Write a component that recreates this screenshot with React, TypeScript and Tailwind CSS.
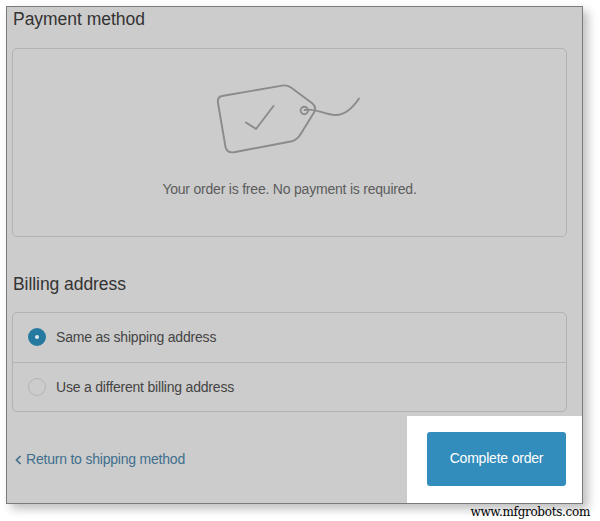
import { useState } from "react";

const options = ["Same as shipping address", "Use a different billing address"];

function PriceTag() {
  return (
    <svg
      width="180"
      height="100"
      viewBox="0 0 180 100"
      fill="none"
      stroke="#8b8b8b"
      strokeWidth="1.9"
      strokeLinecap="round"
      strokeLinejoin="round"
    >
      <path d="M22 26 L82 15.600 Q87 14.800 91 17.500 L112.500 33.500 Q117 37.500 114 42.500 L101 63.500 Q97.500 69.500 92 71.300 L34 82.200 Q27 83.300 25.500 77 L18 33 Q17 27 22 26 Z" />
      <path d="M46 52.500 L56 59 L73.500 36" />
      <circle cx="104.300" cy="40.500" r="3.700" />
      <path d="M104.500 40 C116 37.500 124 45 136 45 C147 45 154 36 159 28.500" />
    </svg>
  );
}

export default function App() {
  const [selected, setSelected] = useState(0);

  return (
    <div className="flex h-[521px] w-[600px] flex-col overflow-hidden bg-white font-['Liberation_Sans',Arial,sans-serif]">
      <main className="mt-1.5 ml-1.5 flex h-[498px] w-[577px] shrink-0 flex-col border border-[#7b7b7b] bg-[#cccccc] shadow-[5px_5px_9px_rgba(0,0,0,0.25)]">
        <section className="mx-[5px] w-[555px]">
          <h2 className="h-[41px] pl-px text-[17.5px] leading-6 tracking-[-0.03px] text-[#333333]">
            Payment method
          </h2>
          <div className="flex h-[189px] flex-col items-center rounded-[5px] border border-[#b3b3b3] pt-[21px]">
            <PriceTag />
            <p className="mt-[9px] text-[14px] leading-5 tracking-[-0.21px] text-[#5c5c5c]">
              Your order is free. No payment is required.
            </p>
          </div>
        </section>

        <section className="mx-[5px] w-[555px]">
          <h2 className="h-[75px] pl-px pt-[35px] text-[17.5px] leading-6 tracking-[-0.06px] text-[#333333]">
            Billing address
          </h2>
          <div className="h-[100px] rounded-[5px] border border-[#b3b3b3]">
            {options.map((label, i) => (
              <label
                key={label}
                className="flex h-[49px] items-center pl-[15px] text-[14px] tracking-[-0.2px] text-[#444444] first:h-[50px] first:border-b first:border-[#b3b3b3]"
              >
                <input
                  type="radio"
                  name="billing"
                  checked={selected === i}
                  onChange={() => setSelected(i)}
                  className="mr-2.5 mb-px size-[18px] appearance-none rounded-full border border-[#b4b4b4] checked:border-[7px] checked:border-[#26799f] checked:bg-[#dce8ee]"
                />
                {label}
              </label>
            ))}
          </div>
        </section>

        <footer className="mt-1 flex h-[87px] justify-between">
          <a href="#" className="flex h-[86px] items-center pl-2 text-[14px] tracking-[-0.21px] text-[#406f8d]">
            <svg width="7" height="10" viewBox="0 0 7 10" fill="none" stroke="currentColor" strokeWidth="1.7" className="mr-1 mt-0.5">
              <path d="M5.500 1 L1.500 5 L5.500 9" />
            </svg>
            Return to shipping method
          </a>
          <div className="w-[175px] bg-white pl-5 pt-4">
            <button className="h-[54px] w-[139px] rounded-[3px] bg-[#338dbc] pb-px text-[14px] tracking-[-0.2px] text-white">
              Complete order
            </button>
          </div>
        </footer>
      </main>
      <div className="z-10 mt-0.5 pr-2.5 text-right font-['DejaVu_Serif',serif] text-[12px] leading-3 tracking-[-0.3px] text-black">
        www.mfgrobots.com
      </div>
    </div>
  );
}
